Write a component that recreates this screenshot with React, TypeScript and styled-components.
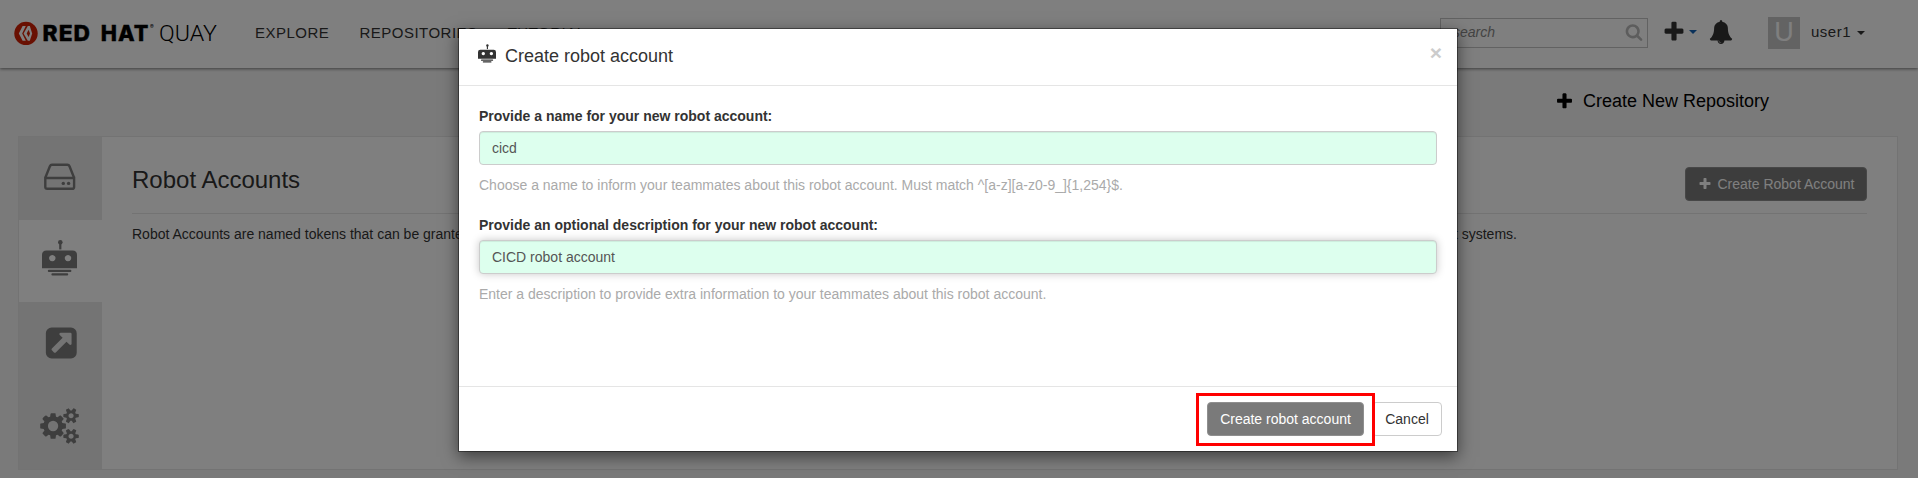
import React from "react";
import styled, { createGlobalStyle } from "styled-components";

const GlobalStyle = createGlobalStyle`
  *, *::before, *::after { box-sizing: border-box; }
  html, body { margin: 0; padding: 0; height: 478px; overflow: hidden; }
  body {
    background: #f5f5f5;
    color: #333;
    font-family: "Liberation Sans", Arial, sans-serif;
    font-size: 14px;
    line-height: 20px;
  }
`;

const Page = styled.div`
  position: relative;
  width: 100%;
  height: 478px;
  overflow: hidden;
`;

/* ---------- header ---------- */

const Header = styled.header`
  display: flex;
  align-items: flex-start;
  height: 68px;
  background: #fff;
  box-shadow: 0 1px 3px rgba(0, 0, 0, 0.5);
  color: #333;
  font-size: 15px;
  letter-spacing: 0.5px;
`;

const LogoLink = styled.a`
  display: block;
  padding: 20px 0 0 14px;
  height: 48px;
`;

const Nav = styled.nav`
  display: flex;
  gap: 30px;
  margin-left: 34px;
  padding-top: 23px;
  flex: 1;
`;

const NavLink = styled.a`
  color: #333;
`;

const SearchBox = styled.div`
  display: flex;
  align-items: center;
  justify-content: space-between;
  width: 208px;
  height: 30px;
  margin-top: 18px;
  padding: 0 4px 2px 12px;
  border: 1px solid #c4c4c4;
  color: #888;
  font-size: 14px;
  font-style: italic;
  letter-spacing: 0;
`;

const SearchGlyph = styled.span`
  color: #bbb;
`;

const Tools = styled.div`
  display: flex;
  align-items: flex-start;
  padding: 20px 0 0 14px;
`;

const Caret = styled.span<{ $color: string }>`
  width: 0;
  height: 0;
  border: 4px solid transparent;
  border-top-color: ${(p) => p.$color};
  border-bottom: 0;
`;

const AddMenu = styled.div`
  display: flex;
  align-items: center;
  gap: 3px;
  width: 47px;
  height: 24px;
`;

const UserMenu = styled.div`
  display: flex;
  align-items: center;
  margin: 17px 53px 0 35px;
  height: 32px;
`;

const Avatar = styled.span`
  width: 32px;
  height: 32px;
  margin-right: 11px;
  background: #c7c7c7;
  color: #fff;
  font-size: 27px;
  line-height: 31px;
  text-align: center;
  letter-spacing: 0;
`;

const UserName = styled.span`
  margin: -2px 6px 0 0;
`;

/* ---------- page body ---------- */

const ActionRow = styled.div`
  display: flex;
  justify-content: flex-end;
  align-items: center;
  gap: 9px;
  height: 68px;
  padding: 0 149px 2px 0;
  color: #000;
  font-size: 18px;
`;

const Panel = styled.section`
  display: flex;
  height: 334px;
  margin: 0 20px 0 18px;
  border: 1px solid #e6e6e6;
  background: #fff;
`;

const Tabs = styled.ul`
  display: flex;
  flex-direction: column;
  width: 83px;
  margin: 0;
  padding: 0;
  list-style: none;
  background: #e8e8e8;
`;

const Tab = styled.li<{ $active?: boolean }>`
  display: flex;
  align-items: center;
  justify-content: center;
  height: ${(p) => (p.$active ? 82 : 83)}px;
  padding: ${(p) => (p.$active ? "0 2px 6px 0" : "0 2px 2px 0")};
  background: ${(p) => (p.$active ? "#fff" : "#e8e8e8")};
`;

const Content = styled.div`
  flex: 1;
  padding: 30px 30px 0;
`;

const ContentHeader = styled.div`
  display: flex;
  justify-content: space-between;
  align-items: flex-start;
  height: 47px;
  border-bottom: 1px solid #e6e6e6;
`;

const Heading = styled.h3`
  margin: -1px 0 0;
  font-size: 24px;
  font-weight: 400;
  line-height: 28px;
`;

const Description = styled.p`
  margin: 10px 0 0;
  white-space: nowrap;
`;

const Button = styled.button<{ $primary?: boolean; $width?: number }>`
  display: inline-flex;
  align-items: center;
  justify-content: center;
  gap: 6px;
  width: ${(p) => (p.$width ? `${p.$width}px` : "auto")};
  height: 34px;
  padding: 0 11px;
  border: 1px solid ${(p) => (p.$primary ? "#8f8f8f" : "#ccc")};
  border-radius: 4px;
  background: ${(p) => (p.$primary ? "#7a7a7a" : "#fff")};
  color: ${(p) => (p.$primary ? "#fff" : "#333")};
  font: 14px/20px "Liberation Sans", Arial, sans-serif;
  white-space: nowrap;
`;

/* ---------- modal ---------- */

const Backdrop = styled.div`
  position: absolute;
  inset: 0;
  display: flex;
  justify-content: center;
  align-items: flex-start;
  padding-top: 28px;
  background: rgba(0, 0, 0, 0.5);
`;

const Modal = styled.div`
  display: flex;
  flex-direction: column;
  width: 1000px;
  height: 424px;
  margin-right: 2px;
  border: 1px solid rgba(0, 0, 0, 0.4);
  background: #fff;
  background-clip: padding-box;
  box-shadow: 0 5px 15px rgba(0, 0, 0, 0.5);
`;

const ModalHeader = styled.div`
  display: flex;
  align-items: flex-start;
  height: 57px;
  padding: 15px 15px 0 19px;
  border-bottom: 1px solid #e5e5e5;
`;

const ModalTitle = styled.h4`
  flex: 1;
  margin: 0;
  padding: 2px 0 0 9px;
  font-size: 18px;
  font-weight: 400;
  line-height: 20px;
`;

const Close = styled.span`
  margin-top: -2px;
  color: #ccc;
  font-size: 21px;
  font-weight: 700;
  line-height: 21px;
`;

const ModalBody = styled.div`
  flex: 1;
  padding: 20px;
`;

const Field = styled.div`
  height: 109px;
`;

const Label = styled.label`
  display: block;
  height: 25px;
  font-weight: 700;
`;

const Input = styled.input<{ $focused?: boolean }>`
  display: block;
  width: 100%;
  height: 34px;
  padding: 6px 12px;
  border: 1px solid #ccc;
  border-radius: 4px;
  outline: none;
  background: #ddffee;
  color: #555;
  font: 14px/20px "Liberation Sans", Arial, sans-serif;
  box-shadow: ${(p) =>
    p.$focused
      ? "inset 0 1px 1px rgba(0,0,0,.075), 0 0 8px rgba(0,0,0,.22)"
      : "inset 0 1px 1px rgba(0,0,0,.075)"};
`;

const Help = styled.div`
  margin-top: 10px;
  color: #aaa;
`;

const ModalFooter = styled.div`
  display: flex;
  justify-content: flex-end;
  gap: 8px;
  height: 65px;
  padding: 15px 15px 0 0;
  border-top: 1px solid #e5e5e5;
`;

const Highlighted = styled.span`
  position: relative;
  height: 34px;
  &::after {
    content: "";
    position: absolute;
    inset: -9px -11px -10px -11px;
    border: 3px solid #f00;
  }
`;

/* ---------- icons ---------- */

const Svg = styled.svg`
  display: block;
  flex: none;
  overflow: visible;
  fill: currentColor;
`;

const TabSvg = styled(Svg)`
  color: #7c7c7c;
`;

const PLUS =
  "M1600 736v192q0 40-28 68t-68 28h-416v416q0 40-28 68t-68 28h-192q-40 0-68-28t-28-68v-416h-416q-40 0-68-28t-28-68v-192q0-40 28-68t68-28h416v-416q0-40 28-68t68-28h192q40 0 68 28t28 68v416h416q40 0 68 28t28 68z";
const SEARCH =
  "M1216 832q0-185-131.5-316.5t-316.5-131.5-316.5 131.5-131.5 316.5 131.5 316.5 316.5 131.5 316.5-131.5 131.5-316.5zm512 832q0 52-38 90t-90 38q-54 0-90-38l-343-342q-179 124-399 124-143 0-273.5-55.5t-225-150-150-225-55.5-273.5 55.5-273.5 150-225 225-150 273.5-55.5 273.5 55.5 225 150 150 225 55.5 273.5q0 220-124 399l343 343q37 37 37 90z";
const BELL =
  "M912 1696q0-16-16-16-59 0-101.5-42.5t-42.5-101.5q0-16-16-16t-16 16q0 73 51.5 124.5t124.5 51.5q16 0 16-16zm816-288q0 52-38 90t-90 38h-448q0 106-75 181t-181 75-181-75-75-181h-448q-52 0-90-38t-38-90q50-42 91-88t85-119.5 74.5-158.5 50-206 19.5-260q0-152 117-282.5t307-158.5q-8-19-8-39 0-40 28-68t68-28 68 28 28 68q0 20-8 39 190 28 307 158.5t117 282.5q0 139 19.5 260t50 206 74.5 158.5 85 119.5 91 88z";
const EXTERNAL =
  "M1472 928v-480q0-26-19-45t-45-19h-480q-42 0-59 39-17 41 14 70l144 144-534 534q-19 19-19 45t19 45l102 102q19 19 45 19t45-19l534-534 144 144q18 19 45 19 12 0 25-5 39-17 39-59zm256-512v960q0 119-84.5 203.5t-203.5 84.5h-960q-119 0-203.5-84.5t-84.5-203.5v-960q0-119 84.5-203.5t203.5-84.5h960q119 0 203.5 84.5t84.5 203.5z";
const SMALL_COG =
  "v140q0 16-149 31-12 27-30 52 51 113 51 138 0 4-4 7-122 71-124 71-8 0-46-47t-52-68q-20 2-30 2t-30-2q-14 21-52 68t-46 47q-2 0-124-71-4-3-4-7 0-25 51-138-18-25-30-52-149-15-149-31v-140q0-16 149-31 13-29 30-52-51-113-51-138 0-4 4-7 4-2 35-20t59-34 30-16q8 0 46 46.5t52 67.5q20-2 30-2t30 2q51-71 92-112l6-2q4 0 124 70 4 3 4 7 0 25-51 138 17 23 30 52 149 15 149 31z";
const COGS =
  "M832 896q0-106-75-181t-181-75-181 75-75 181 75 181 181 75 181-75 75-181zm768 512q0-52-38-90t-90-38-90 38-38 90q0 53 37.5 90.5t90.5 37.5 90.5-37.5 37.5-90.5zm0-1024q0-52-38-90t-90-38-90 38-38 90q0 53 37.5 90.5t90.5 37.5 90.5-37.5 37.5-90.5zm-384 421v185q0 10-7 19.5t-16 10.5l-155 24q-11 35-32 76 34 48 90 115 7 11 7 20 0 12-7 19-23 30-82.5 89.5t-78.5 59.5q-11 0-21-7l-115-90q-37 19-77 31-11 108-23 155-7 24-30 24h-186q-11 0-20-7.5t-10-17.5l-23-153q-34-10-75-31l-118 89q-7 7-20 7-11 0-21-8-144-133-144-160 0-9 7-19 10-14 41-53t47-61q-23-44-35-82l-152-24q-10-1-17-9.5t-7-19.5v-185q0-10 7-19.5t16-10.5l155-24q11-35 32-76-34-48-90-115-7-11-7-20 0-12 7-20 22-30 82-89t79-59q11 0 21 7l115 90q34-18 77-32 11-108 23-154 7-24 30-24h186q11 0 20 7.5t10 17.5l23 153q34 10 75 31l118-89q8-7 20-7 11 0 21 8 144 133 144 160 0 8-7 19-12 16-42 54t-45 60q23 48 34 82l152 23q10 2 17 10.5t7 19.5zm640 533" +
  SMALL_COG +
  "m0-1024" +
  SMALL_COG;

const Glyph = ({ d, size }: { d: string; size: number }) => (
  <Svg width={size} height={size} viewBox="0 0 1792 1792">
    <path d={d} />
  </Svg>
);

const DriveIcon = () => (
  <TabSvg width="32" height="28" viewBox="0 0 32 28">
    <path
      d="M1.5 13.2 5.9 2.3Q6.5.8 8 .8h15.4q1.5 0 2.1 1.5l4.4 10.9M1.3 14h28.8v8.9q0 1.9-1.9 1.9h-25q-1.9 0-1.9-1.9z"
      fill="none"
      stroke="currentColor"
      strokeWidth="2.4"
    />
    <circle cx="19.3" cy="19.4" r="1.7" />
    <circle cx="24.6" cy="19.4" r="1.7" />
  </TabSvg>
);

const RobotShape = () => (
  <>
    <circle cx="18.3" cy="2.3" r="2.3" />
    <rect x="17.2" y="3" width="2.2" height="6.4" />
    <path
      d="M4.5 10.5h26Q35 10.5 35 15v13.3H0V15q0-4.5 4.5-4.5zM10.3 14.9a3.2 3.2 0 1 0 .01 0zM26 14.9a3.2 3.2 0 1 0 .01 0z"
      fillRule="evenodd"
    />
    <rect x="5.8" y="29.8" width="23.6" height="2.3" rx="1" />
    <rect x="9.4" y="33.2" width="16.8" height="2.4" rx="1" />
  </>
);

const TabRobot = () => (
  <TabSvg width="35" height="36" viewBox="0 0 35 36">
    <RobotShape />
  </TabSvg>
);

const Logo = () => (
  <Svg width="207" height="28" viewBox="0 0 207 28">
    <circle cx="12" cy="13.4" r="11.7" fill="#d32005" />
    <path d="M8.6 6h3.2L8.2 13.4l3.6 7.4H8.6L4.8 13.4z" fill="#fff" />
    <path d="M13.8 6h2l2.4 7.4-2.4 7.4h-2L9.6 13.4z" fill="#fff" />
    <path d="M14.6 9.8 16 13.4l-1.4 3.6-1.9-3.6z" fill="#d32005" />
    <g fill="#000" stroke="#000" strokeWidth="0.4" fontFamily="Inter, sans-serif" fontWeight="800" fontSize="22">
      <text x="28.6" y="21.2" textLength="48.5" lengthAdjust="spacingAndGlyphs" letterSpacing="1">RED</text>
      <text x="86.8" y="21.2" textLength="48.5" lengthAdjust="spacingAndGlyphs" letterSpacing="1">HAT</text>
    </g>
    <text x="136" y="9.3" fill="#000" fontFamily="Inter, sans-serif" fontSize="5.5" letterSpacing="0">®</text>
    <text
      x="145"
      y="21.2"
      textLength="58"
      lengthAdjust="spacingAndGlyphs"
      fill="#000"
      fontFamily="Roboto, sans-serif"
      fontWeight="300"
      fontSize="22.5"
      letterSpacing="0"
    >
      QUAY
    </text>
  </Svg>
);

export default function App() {
  return (
    <Page>
      <GlobalStyle />
      <Header>
        <LogoLink>
          <Logo />
        </LogoLink>
        <Nav>
          <NavLink>EXPLORE</NavLink>
          <NavLink>REPOSITORIES</NavLink>
          <NavLink>TUTORIAL</NavLink>
        </Nav>
        <SearchBox>
          search
          <SearchGlyph>
            <Glyph d={SEARCH} size={18} />
          </SearchGlyph>
        </SearchBox>
        <Tools>
          <AddMenu>
            <Glyph d={PLUS} size={24} />
            <Caret $color="#1563b5" />
          </AddMenu>
          <Glyph d={BELL} size={24} />
        </Tools>
        <UserMenu>
          <Avatar>U</Avatar>
          <UserName>user1</UserName>
          <Caret $color="#333" />
        </UserMenu>
      </Header>

      <ActionRow>
        <Glyph d={PLUS} size={19} />
        Create New Repository
      </ActionRow>

      <Panel>
        <Tabs>
          <Tab><DriveIcon /></Tab>
          <Tab $active><TabRobot /></Tab>
          <Tab>
            <TabSvg width="36" height="36" viewBox="0 0 1792 1792"><path d={EXTERNAL} /></TabSvg>
          </Tab>
          <Tab>
            <TabSvg width="39" height="36" viewBox="-64 0 1920 1792"><path d={COGS} /></TabSvg>
          </Tab>
        </Tabs>
        <Content>
          <ContentHeader>
            <Heading>Robot Accounts</Heading>
            <Button $primary $width={182}>
              <Glyph d={PLUS} size={14} />
              Create Robot Account
            </Button>
          </ContentHeader>
          <Description>
            Robot Accounts are named tokens that can be granted permissions on multiple repositories
            under this organization. They are typically used in environments where credentials have to
            be shared, such as deployment systems.
          </Description>
        </Content>
      </Panel>

      <Backdrop>
        <Modal>
          <ModalHeader>
            <Svg width="18" height="19" viewBox="0 0 35 36">
              <RobotShape />
            </Svg>
            <ModalTitle>Create robot account</ModalTitle>
            <Close>×</Close>
          </ModalHeader>
          <ModalBody>
            <Field>
              <Label>Provide a name for your new robot account:</Label>
              <Input defaultValue="cicd" />
              <Help>
                Choose a name to inform your teammates about this robot account. Must match
                ^[a-z][a-z0-9_]&#123;1,254&#125;$.
              </Help>
            </Field>
            <Field>
              <Label>Provide an optional description for your new robot account:</Label>
              <Input $focused defaultValue="CICD robot account" />
              <Help>
                Enter a description to provide extra information to your teammates about this robot
                account.
              </Help>
            </Field>
          </ModalBody>
          <ModalFooter>
            <Highlighted>
              <Button $primary $width={157}>Create robot account</Button>
            </Highlighted>
            <Button $width={70}>Cancel</Button>
          </ModalFooter>
        </Modal>
      </Backdrop>
    </Page>
  );
}
